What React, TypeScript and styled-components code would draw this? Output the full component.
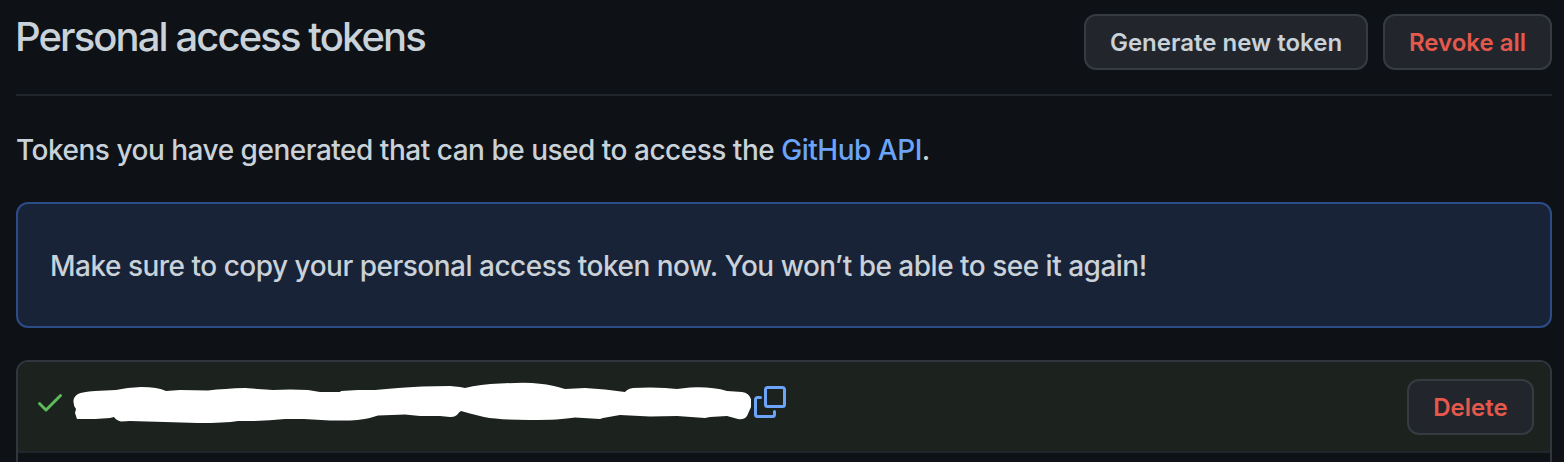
import React from "react";
import styled, { createGlobalStyle } from "styled-components";

const GlobalStyle = createGlobalStyle`
  * { box-sizing: border-box; }
  html, body { margin: 0; background: #0e1116; overflow: hidden; }
  body { font-family: Inter, "Liberation Sans", sans-serif; color: #c9d1d9; }
`;

const Page = styled.main`
  height: 462px;
  padding: 14px 12px 0 16px;
  overflow: hidden;
`;

const Header = styled.header`
  display: flex;
  justify-content: space-between;
  align-items: flex-start;
  height: 82px;
  border-bottom: 2px solid #21262d;
`;

const Title = styled.h1`
  margin: 0 0 0 -1px;
  font-size: 40px;
  font-weight: 450;
  line-height: 46px;
  letter-spacing: -1.9px;
  white-space: nowrap;
`;

const Actions = styled.div`
  display: flex;
  gap: 15px;
`;

const Button = styled.button<{ $width: number; $danger?: boolean }>`
  width: ${(p) => p.$width}px;
  height: 56px;
  padding: 2px 0 0;
  border: 2px solid #363b42;
  border-radius: 12px;
  background: #22262c;
  color: ${(p) => (p.$danger ? "#e5594d" : "#c9d1d9")};
  font-family: inherit;
  font-size: 24px;
  font-weight: 580;
  line-height: 40px;
  letter-spacing: 0;
  white-space: nowrap;
`;

const Intro = styled.p`
  margin: 33px 0 31px;
  font-size: 28px;
  font-weight: 450;
  line-height: 42px;
  letter-spacing: -0.49px;
  white-space: nowrap;
`;

const Link = styled.a`
  color: #6ba4f8;
  text-decoration: none;
`;

const Notice = styled.div`
  height: 126px;
  padding: 41px 32px 39px;
  border: 2px solid #2b4c86;
  border-radius: 12px;
  background: #192337;
  font-size: 28px;
  font-weight: 450;
  line-height: 42px;
  letter-spacing: -0.5px;
  white-space: nowrap;
`;

const TokenList = styled.section`
  height: 140px;
  margin-top: 32px;
  border: 2px solid #30363d;
  border-radius: 12px;
  overflow: hidden;
`;

const TokenRow = styled.div`
  display: flex;
  align-items: center;
  height: 91px;
  padding: 0 16px;
  border-bottom: 2px solid #21262d;
  background: #1c231f;
`;

const Icon = styled.svg<{ $color: string }>`
  flex: none;
  width: 32px;
  height: 32px;
  margin-bottom: 9px;
  fill: ${(p) => p.$color};
`;

const Redaction = styled.svg`
  flex: none;
  width: 680px;
  height: 44px;
  margin: 0 2px 7px 6px;
  fill: #fff;
`;

const Spacer = styled.div`
  flex: 1;
`;

export default function App() {
  return (
    <>
      <GlobalStyle />
      <Page>
        <Header>
          <Title>Personal access tokens</Title>
          <Actions>
            <Button $width={284}>Generate new token</Button>
            <Button $width={169} $danger>Revoke all</Button>
          </Actions>
        </Header>
        <Intro>
          Tokens you have generated that can be used to access the <Link>GitHub API</Link>.
        </Intro>
        <Notice>Make sure to copy your personal access token now. You won’t be able to see it again!</Notice>
        <TokenList>
          <TokenRow>
            <Icon viewBox="0 0 16 16" $color="#5dbb59">
              <path d="M13.78 4.22a.75.75 0 010 1.06l-7.25 7.25a.75.75 0 01-1.06 0L2.22 9.28a.75.75 0 011.06-1.06L6 10.94l6.72-6.72a.75.75 0 011.06 0z" />
            </Icon>
            <Redaction viewBox="72 381 680 44">
              <path d="M73.5 402Q73 397 78 394Q82 392 95 391L116 390Q127 387.5 141 387Q158 387 166 391L180 390L208 390.5Q225 388.5 245 388L273 390L290 389.5L308 390L320 392H340L341 391L358 390L375 390L398 388Q420 386 450 386L460 387L465 388Q480 384 500 383.5Q520 382.5 532 383Q548 384 558 387L565 389L585 388L605 389.5L625 392Q628 388.5 633 388L650 387.5L665 388L677 389L690 387.5Q712 386.5 727 391L742 392Q749 393 751 399V407L747 416Q744 420 738 419L727 416L710 417L705 418L677 416L650 416.5L620 415L603 418L600 419L575 417.5Q560 420 530 420Q500 420 484 417L470 413.5L461 411Q459 412 457 415Q454 417.5 450 417L440 416H420L405 414.5L378 415.5Q365 420 350 420.5H330L304 419L285 419Q262 421.5 238 421Q225 423 198 423L165 422L130 421L121 421.5Q116 420 114 417L110 418L95 419L77 419L75 413L76 409Q73.5 406 73.5 402Z" />
            </Redaction>
            <Icon viewBox="0 0 16 16" $color="#6ba4f8">
              <path d="M0 6.75C0 5.784.784 5 1.75 5h1.5a.75.75 0 010 1.5h-1.5a.25.25 0 00-.25.25v7.5c0 .138.112.25.25.25h7.5a.25.25 0 00.25-.25v-1.5a.75.75 0 011.5 0v1.5A1.75 1.75 0 019.25 16h-7.5A1.75 1.75 0 010 14.25v-7.5z" />
              <path d="M5 1.75C5 .784 5.784 0 6.75 0h7.5C15.216 0 16 .784 16 1.75v7.5A1.75 1.75 0 0114.25 11h-7.5A1.75 1.75 0 015 9.25v-7.5zm1.75-.25a.25.25 0 00-.25.25v7.5c0 .138.112.25.25.25h7.5a.25.25 0 00.25-.25v-7.5a.25.25 0 00-.25-.25h-7.5z" />
            </Icon>
            <Spacer />
            <Button $width={127} $danger>Delete</Button>
          </TokenRow>
        </TokenList>
      </Page>
    </>
  );
}
